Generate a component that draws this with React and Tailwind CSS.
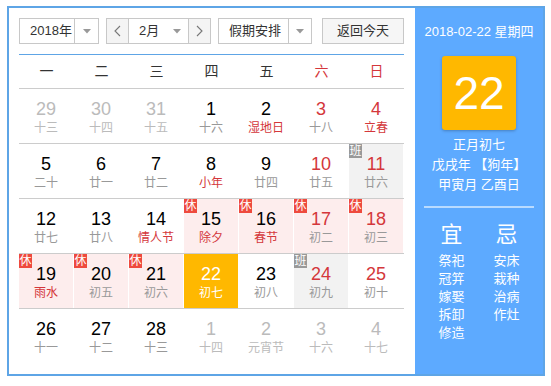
import React from 'react'

const CJK = { fontFamily: '"Liberation Sans", Arial, "Noto Sans CJK SC", sans-serif' }

// kind: prev (other month), sel (today), rest (休), work (班)
const weeks = [
  [
    { d: 29, l: '十三', o: 1 }, { d: 30, l: '十四', o: 1 }, { d: 31, l: '十五', o: 1 },
    { d: 1, l: '十六' }, { d: 2, l: '湿地日', lr: 1 }, { d: 3, l: '十八', r: 1 }, { d: 4, l: '立春', r: 1, lr: 1 },
  ],
  [
    { d: 5, l: '二十' }, { d: 6, l: '廿一' }, { d: 7, l: '廿二' }, { d: 8, l: '小年', lr: 1 },
    { d: 9, l: '廿四' }, { d: 10, l: '廿五', r: 1 }, { d: 11, l: '廿六', r: 1, work: 1 },
  ],
  [
    { d: 12, l: '廿七' }, { d: 13, l: '廿八' }, { d: 14, l: '情人节', lr: 1 },
    { d: 15, l: '除夕', lr: 1, rest: 1 }, { d: 16, l: '春节', lr: 1, rest: 1 },
    { d: 17, l: '初二', r: 1, rest: 1 }, { d: 18, l: '初三', r: 1, rest: 1 },
  ],
  [
    { d: 19, l: '雨水', lr: 1, rest: 1 }, { d: 20, l: '初五', rest: 1 }, { d: 21, l: '初六', rest: 1 },
    { d: 22, l: '初七', sel: 1 }, { d: 23, l: '初八' }, { d: 24, l: '初九', r: 1, work: 1 }, { d: 25, l: '初十', r: 1 },
  ],
  [
    { d: 26, l: '十一' }, { d: 27, l: '十二' }, { d: 28, l: '十三' },
    { d: 1, l: '十四', o: 1 }, { d: 2, l: '元宵节', o: 1 }, { d: 3, l: '十六', o: 1 }, { d: 4, l: '十七', o: 1 },
  ],
]

function Caret() {
  return (
    <svg width="8" height="5" viewBox="0 0 8 5">
      <path d="M0 0 L8 0 L4 4.5 Z" fill="#999" />
    </svg>
  )
}

function Cell({ c }) {
  let bg = ''
  if (c.rest) bg = 'bg-[#fdeded]'
  if (c.work) bg = 'bg-[#f2f2f2]'
  if (c.sel) bg = 'bg-[#ffb800]'

  let num = 'text-black'
  if (c.r) num = 'text-[#d4373b]'
  if (c.o) num = 'text-[#bbbbbb]'
  if (c.sel) num = 'text-white'

  let lun = 'text-[#999999]'
  if (c.lr) lun = 'text-[#d4373b]'
  if (c.o) lun = 'text-[#bbbbbb]'
  if (c.sel) lun = 'text-white'

  return (
    <div className="h-full pr-px">
      <div className={`relative h-full flex flex-col items-center pt-[10px] ${bg}`}>
        {c.rest ? (
          <span className="absolute left-0 top-0 w-[13px] h-[14px] bg-[#ee4a3e] text-white text-[12px] leading-[14px] text-center">休</span>
        ) : null}
        {c.work ? (
          <span className="absolute left-0 top-0 w-[13px] h-[14px] bg-[#999999] text-white text-[12px] leading-[14px] text-center">班</span>
        ) : null}
        <span className={`text-[18px] leading-[20px] ${num}`}>{c.d}</span>
        <span className={`text-[12px] leading-[17px] mt-[1px] ${lun}`}>{c.l}</span>
      </div>
    </div>
  )
}

export default function App() {
  return (
    <div className="w-[551px] h-[386px] bg-white pl-[7px] pt-[6px]" style={CJK}>
      <div className="w-[538px] h-[370px] border-2 border-[#5ea5e6] flex">
        {/* left: calendar */}
        <div className="w-[406px] pl-[10px] pr-[11px] pt-[10px]">
          <div className="flex items-center pb-[10px] border-b border-[#5ea5e6] text-[13px] text-[#333]">
            <div className="flex h-[26px] w-[80px] border border-[#c8c8c8]">
              <span className="flex-1 pl-[10px] leading-[24px]">2018年</span>
              <span className="w-[24px] border-l border-[#c8c8c8] flex items-center justify-center"><Caret /></span>
            </div>
            <div className="ml-[7px] flex h-[26px] w-[105px] border border-[#c8c8c8]">
              <span className="w-[22px] bg-[#f4f4f4] border-r border-[#c8c8c8] flex items-center justify-center">
                <svg width="7" height="12" viewBox="0 0 7 12"><path d="M6 1 L1 6 L6 11" fill="none" stroke="#777" strokeWidth="1.1" /></svg>
              </span>
              <span className="flex-1 flex items-center pl-[10px] pr-[7px]">
                <span className="flex-1 leading-[24px]">2月</span>
                <Caret />
              </span>
              <span className="w-[22px] bg-[#f4f4f4] border-l border-[#c8c8c8] flex items-center justify-center">
                <svg width="7" height="12" viewBox="0 0 7 12"><path d="M1 1 L6 6 L1 11" fill="none" stroke="#777" strokeWidth="1.1" /></svg>
              </span>
            </div>
            <div className="ml-[7px] flex h-[26px] w-[94px] border border-[#c8c8c8]">
              <span className="flex-1 pl-[10px] leading-[24px]">假期安排</span>
              <span className="w-[23px] border-l border-[#c8c8c8] flex items-center justify-center"><Caret /></span>
            </div>
            <div className="ml-[10px] h-[26px] w-[82px] border border-[#c8c8c8] bg-[#f6f6f6] text-center leading-[24px]">返回今天</div>
          </div>

          <div className="grid grid-cols-7 h-[34px] border-b border-[#cccccc] text-[14px] items-center text-center">
            <span className="text-[#333]">一</span>
            <span className="text-[#333]">二</span>
            <span className="text-[#333]">三</span>
            <span className="text-[#333]">四</span>
            <span className="text-[#333]">五</span>
            <span className="text-[#d4373b]">六</span>
            <span className="text-[#d4373b]">日</span>
          </div>

          {weeks.map((w, i) => (
            <div key={i} className={`grid grid-cols-7 h-[55px] ${i < 4 ? 'border-b border-[#cccccc]' : ''}`}>
              {w.map((c, j) => <Cell key={j} c={c} />)}
            </div>
          ))}
        </div>

        {/* right: day detail */}
        <div className="flex-1 bg-[#5daaff] flex flex-col items-center text-white">
          <div className="mt-[16px] text-[13px] leading-[16px]">2018-02-22 星期四</div>
          <div className="mt-[16px] w-[74px] h-[74px] rounded-[3px] bg-[#ffb800] shadow-[0_1px_3px_rgba(0,0,0,0.25)] flex items-center justify-center text-[46px] leading-none">22</div>
          <div className="mt-[5px] text-[13px] leading-[20px] text-center">
            <div>正月初七</div>
            <div>戊戌年 【狗年】</div>
            <div>甲寅月 乙酉日</div>
          </div>
          <div className="mt-[11px] w-[110px] h-[2px] bg-[#b9dbff]" />
          <div className="mt-[14px] flex gap-[15px]">
            <div className="w-[40px] flex flex-col items-center">
              <span className="text-[22px] leading-[26px]">宜</span>
              <div className="mt-[4px] text-[13px] leading-[18px] text-center">
                <div>祭祀</div>
                <div>冠笄</div>
                <div>嫁娶</div>
                <div>拆卸</div>
                <div>修造</div>
              </div>
            </div>
            <div className="w-[40px] flex flex-col items-center">
              <span className="text-[22px] leading-[26px]">忌</span>
              <div className="mt-[4px] text-[13px] leading-[18px] text-center">
                <div>安床</div>
                <div>栽种</div>
                <div>治病</div>
                <div>作灶</div>
              </div>
            </div>
          </div>
        </div>
      </div>
    </div>
  )
}
